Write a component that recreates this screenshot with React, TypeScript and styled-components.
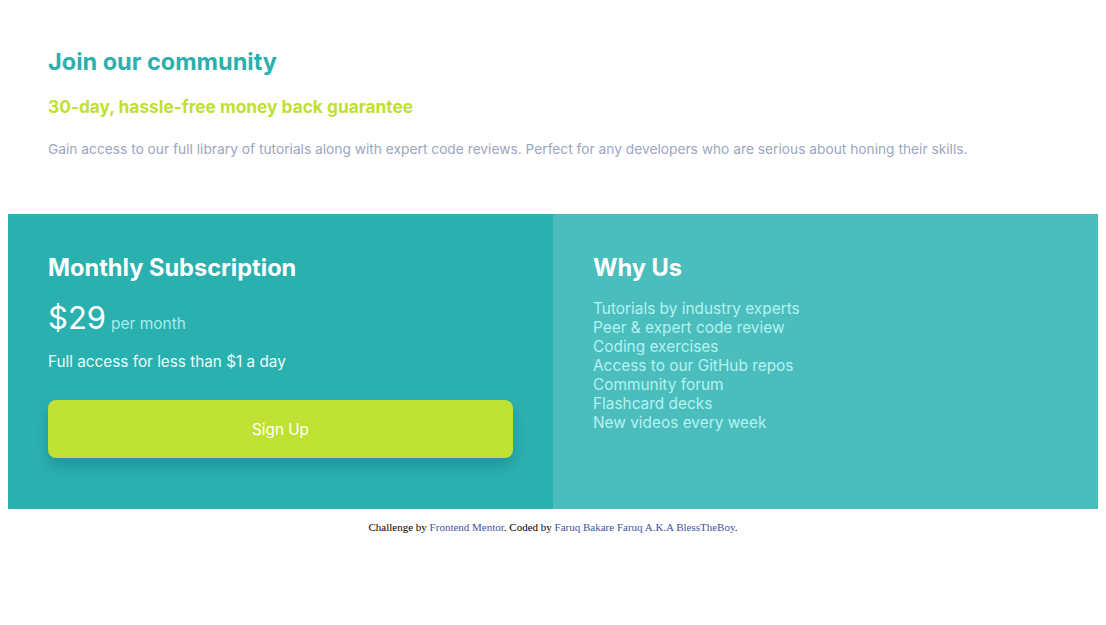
import React from "react";
import styled, { createGlobalStyle } from "styled-components";

const Global = createGlobalStyle`
  body { margin: 8px; background: #fff; }
`;

const font = `Inter, "Noto Sans", sans-serif`;

const Card = styled.main`
  font-family: ${font};
  display: flex;
  flex-direction: column;
`;

const Top = styled.section`
  padding: 40px 40px 53px;
`;

const Title = styled.h1`
  margin: 0;
  font-size: 23.5px;
  line-height: 28px;
  font-weight: 700;
  color: #2bb0ae;
`;

const Guarantee = styled.h2`
  margin: 19px 0 0;
  font-size: 17.3px;
  line-height: 24px;
  font-weight: 700;
  color: #bfdf32;
`;

const Intro = styled.p`
  margin: 18px 0 0;
  font-size: 13.76px;
  line-height: 24px;
  color: #9ba7bf;
`;

const Bottom = styled.section`
  display: grid;
  grid-template-columns: 1fr 1fr;
  height: 295px;
`;

const Panel = styled.div<{ $bg: string }>`
  background: ${(p) => p.$bg};
  padding: 40px 40px;
  display: flex;
  flex-direction: column;
`;

const PanelTitle = styled.h3`
  margin: 0;
  font-size: 23.6px;
  line-height: 28px;
  font-weight: 700;
  color: #fff;
`;

const PriceRow = styled.div`
  margin-top: 16px;
  display: flex;
  align-items: baseline;
  gap: 5px;
`;

const Price = styled.span`
  font-size: 31px;
  line-height: 40px;
  color: #fff;
`;

const Per = styled.span`
  font-size: 15.5px;
  color: #a9ece9;
`;

const Note = styled.p`
  margin: 12px 0 0;
  font-size: 15.3px;
  line-height: 24px;
  color: #eafcfb;
`;

const Button = styled.button`
  margin-top: 26px;
  height: 58px;
  border: none;
  border-radius: 8px;
  background: #bfe133;
  color: #fff;
  font-family: ${font};
  font-size: 15.3px;
  box-shadow: 0 8px 14px rgba(0, 80, 80, 0.28);
  cursor: pointer;
`;

const List = styled.ul`
  margin: 17px 0 0;
  padding: 0;
  list-style: none;
`;

const Item = styled.li`
  font-size: 15.4px;
  line-height: 19px;
  color: #b3f3f1;
`;

const Attribution = styled.footer`
  font-family: "Liberation Serif", serif;
  font-size: 11px;
  text-align: center;
  margin-top: 12px;
  color: #000;
  a { color: #3e52a3; text-decoration: none; }
`;

const reasons = [
  "Tutorials by industry experts",
  "Peer & expert code review",
  "Coding exercises",
  "Access to our GitHub repos",
  "Community forum",
  "Flashcard decks",
  "New videos every week",
];

export default function App() {
  return (
    <>
      <Global />
      <Card>
        <Top>
          <Title>Join our community</Title>
          <Guarantee>30-day, hassle-free money back guarantee</Guarantee>
          <Intro>
            Gain access to our full library of tutorials along with expert code reviews. Perfect for any developers who are serious about honing their skills.
          </Intro>
        </Top>
        <Bottom>
          <Panel $bg="#2bb0b0">
            <PanelTitle>Monthly Subscription</PanelTitle>
            <PriceRow>
              <Price>$29</Price>
              <Per>per month</Per>
            </PriceRow>
            <Note>Full access for less than $1 a day</Note>
            <Button>Sign Up</Button>
          </Panel>
          <Panel $bg="#4bbdbd">
            <PanelTitle>Why Us</PanelTitle>
            <List>
              {reasons.map((r) => (
                <Item key={r}>{r}</Item>
              ))}
            </List>
          </Panel>
        </Bottom>
      </Card>
      <Attribution>
        Challenge by <a href="#">Frontend Mentor</a>. Coded by <a href="#">Faruq Bakare Faruq A.K.A BlessTheBoy</a>.
      </Attribution>
    </>
  );
}
